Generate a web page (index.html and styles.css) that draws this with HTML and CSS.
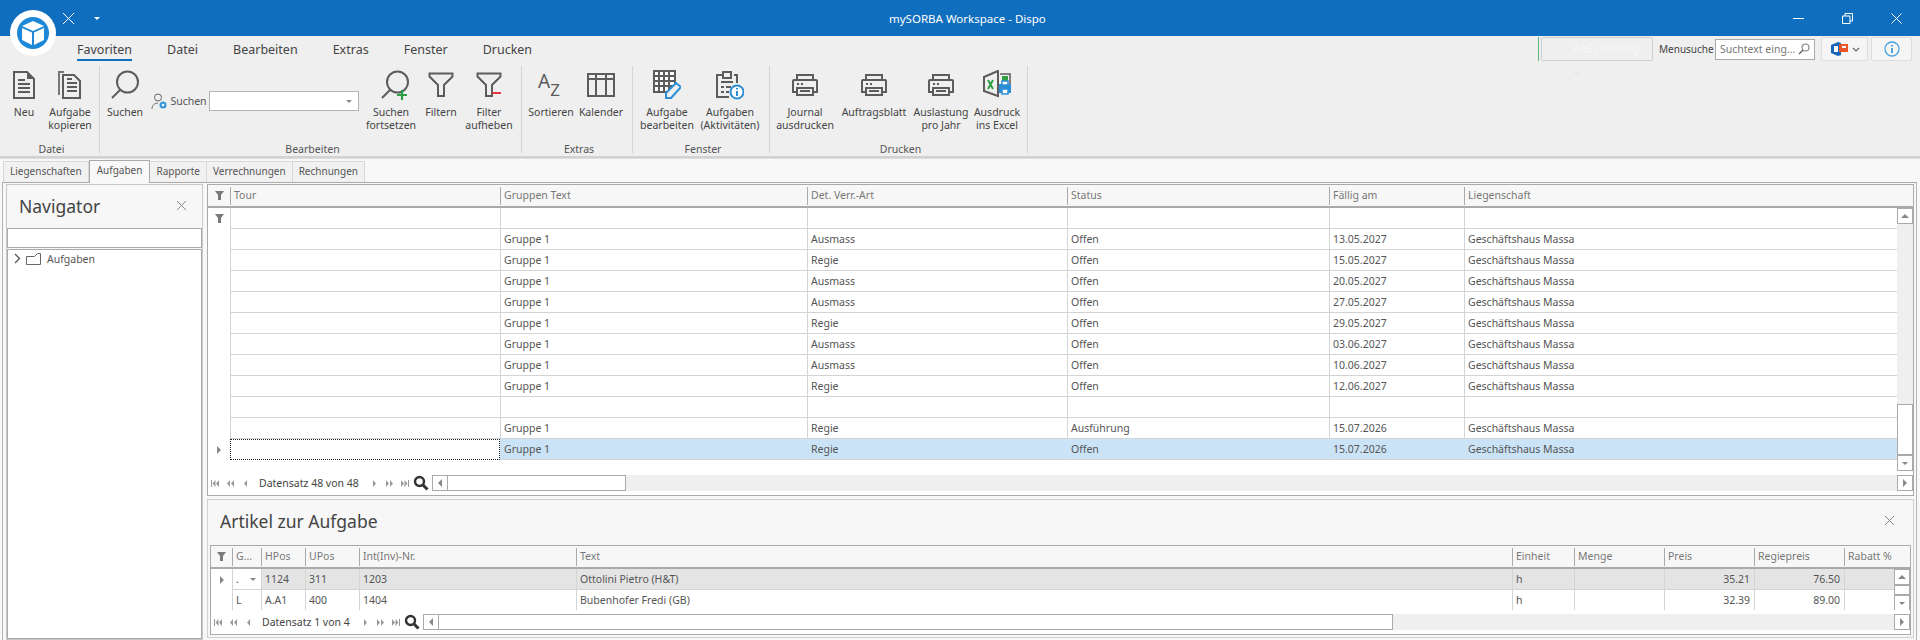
FILE: index.html
```html
<!DOCTYPE html>
<html lang="de">
<head>
    <meta charset="UTF-8">
    <title>mySORBA Workspace - Dispo</title>
    <link rel="stylesheet" href="styles.css">
</head>
<body>

    <svg class="defs" width="0" height="0">
        <symbol id="i-doc" viewBox="0 0 24 30"><path d="M2 2h13l7 7v19H2z" fill="none" stroke="#5c5c5c" stroke-width="2"/><path d="M15 2v7h7z" fill="#5c5c5c"/><path d="M6 10h7M6 14h12M6 18h12M6 22h12" stroke="#5c5c5c" stroke-width="2"/></symbol>
        <symbol id="i-mag" viewBox="0 0 30 30"><circle cx="17.500" cy="12" r="10.500" fill="none" stroke="#5c5c5c" stroke-width="2"/><path d="M10 20L2 28" stroke="#5c5c5c" stroke-width="2"/></symbol>
        <symbol id="i-funnel" viewBox="0 0 26 26"><path d="M1.500 1.500h23v3L16 13v11h-6V13L1.500 4.500z" fill="none" stroke="#5c5c5c" stroke-width="2"/></symbol>
        <symbol id="i-print" viewBox="0 0 28 24"><path d="M6 7V2h16v5M6 19H2V8q0-1 1-1h22q1 0 1 1v11h-4" fill="none" stroke="#5c5c5c" stroke-width="2"/><path d="M6 15h16v7H6z" fill="none" stroke="#5c5c5c" stroke-width="2"/><path d="M6 11h2M10 11h2M9 18h10" stroke="#5c5c5c" stroke-width="2"/></symbol>
        <symbol id="i-small-funnel" viewBox="0 0 11 11"><path d="M1 1h9L7 5v5H4V5z" fill="#7a7a7a"/></symbol>
        <symbol id="i-lens" viewBox="0 0 16 16"><circle cx="6.500" cy="6.500" r="4.500" fill="none" stroke="#333" stroke-width="2.400"/><path d="M10 10l4.500 4.500" stroke="#333" stroke-width="3"/></symbol>
        <symbol id="p-first" viewBox="0 0 8 7"><path d="M0 0h1v7H0zM4.500 0v7L1.500 3.500zM8 0v7L5 3.500z" fill="#999"/></symbol>
        <symbol id="p-prevs" viewBox="0 0 8 7"><path d="M4 0v7L1 3.500zM8 0v7L5 3.500z" fill="#999"/></symbol>
        <symbol id="p-prev" viewBox="0 0 8 7"><path d="M6 0v7L3 3.500z" fill="#999"/></symbol>
        <symbol id="p-next" viewBox="0 0 8 7"><path d="M2 0v7l3-3.500z" fill="#999"/></symbol>
        <symbol id="p-nexts" viewBox="0 0 8 7"><path d="M0 0v7l3-3.500zM4 0v7l3-3.500z" fill="#999"/></symbol>
        <symbol id="p-last" viewBox="0 0 8 7"><path d="M0 0v7l3-3.500zM3.500 0v7l3-3.500zM7 0h1v7H7z" fill="#999"/></symbol>
    </svg>

    <div class="titlebar">
        <div class="quick">
            <svg class="quick-x" width="13" height="13" viewBox="0 0 13 13"><path d="M1 1l11 11M12 1L1 12" stroke="#fff" stroke-width="1"/></svg>
            <span class="quick-caret"></span>
        </div>
        <div class="title-text">mySORBA Workspace - Dispo</div>
        <div class="win-btns">
            <svg width="11" height="11" viewBox="0 0 11 11"><path d="M0 5.500h11" stroke="#fff"/></svg>
            <svg width="11" height="11" viewBox="0 0 11 11"><path d="M.5 3h7.500v7.500H.5zM3 3V.5h7.500V8H8" fill="none" stroke="#fff"/></svg>
            <svg width="11" height="11" viewBox="0 0 11 11"><path d="M.5.500l10 10M10.500.500l-10 10" stroke="#fff"/></svg>
        </div>
    </div>

    <div class="logo">
        <div class="logo-inner">
            <svg width="24" height="26" viewBox="0 0 24 26"><path d="M12 1l11 5-11 5L1 6z" fill="#fff"/><path d="M1 8l10 4.500V25L1 20z" fill="#fff"/><path d="M23 8l-10 4.500V25l10-5z" fill="#fff"/></svg>
        </div>
    </div>

    <div class="ribbon">
        <div class="menu-row">
            <nav class="menu">
                <span class="menu-item active">Favoriten</span>
                <span class="menu-item">Datei</span>
                <span class="menu-item">Bearbeiten</span>
                <span class="menu-item">Extras</span>
                <span class="menu-item">Fenster</span>
                <span class="menu-item">Drucken</span>
            </nav>
            <div class="menu-tools">
                <div class="tenant">AaEsTesting <span class="tenant-arrow">&#8964;</span></div>
                <span class="tool-label">Menusuche</span>
                <div class="tool-search">
                    <span>Suchtext eing...</span>
                    <svg width="12" height="12" viewBox="0 0 12 12"><circle cx="7.500" cy="4.500" r="3.500" fill="none" stroke="#888" stroke-width="1.200"/><path d="M5 7L1 11" stroke="#666" stroke-width="1.500"/></svg>
                </div>
                <div class="tool-btn tool-office">
                    <svg width="19" height="16" viewBox="0 0 19 16"><path d="M8 1L1 4v8l7 3 3-1V2z" fill="#1767b8"/><path d="M4 5h4v6H4z" fill="#fff"/><path d="M9 3h9v8H9z" fill="#e8562a"/><path d="M12 5h4v2h-4z" fill="#fff"/></svg>
                    <svg width="8" height="5" viewBox="0 0 8 5"><path d="M1 1l3 3 3-3" fill="none" stroke="#666" stroke-width="1.200"/></svg>
                </div>
                <div class="tool-btn tool-info">
                    <svg width="16" height="16" viewBox="0 0 16 16"><circle cx="8" cy="8" r="7" fill="none" stroke="#4aa3df" stroke-width="1.300"/><path d="M8 4v1.500M8 7v5" stroke="#2b8fd6" stroke-width="1.600"/></svg>
                </div>
            </div>
        </div>

        <div class="groups">
            <section class="group g-datei">
                <div class="group-items">
                    <div class="rb w40"><svg class="rb-icon" width="24" height="30"><use href="#i-doc"/></svg><span>Neu</span></div>
                    <div class="rb w48">
                        <svg class="rb-icon" width="24" height="30" viewBox="0 0 24 30"><path d="M6 2h-5v23" fill="none" stroke="#777" stroke-width="2"/><path d="M5 5h11l6 6v17H5z" fill="none" stroke="#5c5c5c" stroke-width="2"/><path d="M9 13h10M9 17h10M9 21h10M9 9h5" stroke="#5c5c5c" stroke-width="2"/></svg>
                        <span>Aufgabe kopieren</span>
                    </div>
                </div>
                <div class="group-name">Datei</div>
            </section>

            <section class="group g-bearb">
                <div class="group-items">
                    <div class="rb w42"><svg class="rb-icon" width="30" height="30"><use href="#i-mag"/></svg><span>Suchen</span></div>
                    <div class="rb-search">
                        <svg width="17" height="17" viewBox="0 0 17 17"><circle cx="7" cy="4.500" r="3.500" fill="none" stroke="#666"/><path d="M1 16c0-4 3-6 6-6" fill="none" stroke="#666"/><circle cx="12" cy="12" r="3.500" fill="#3a97d9"/><circle cx="12" cy="12" r="1.200" fill="#fff"/></svg>
                        <span>Suchen</span>
                        <div class="combo"><i class="caret-down"></i></div>
                    </div>
                    <div class="rb w54 icon-over">
                        <svg class="rb-icon" width="30" height="30" viewBox="0 0 30 30"><use href="#i-mag"/><path d="M17 25h10M22 20v10" stroke="#2f9e44" stroke-width="2.200"/></svg>
                        <span>Suchen fortsetzen</span>
                    </div>
                    <div class="rb w42"><svg class="rb-icon" width="26" height="30" viewBox="0 -2 26 30"><use href="#i-funnel" width="26" height="26"/></svg><span>Filtern</span></div>
                    <div class="rb w50">
                        <svg class="rb-icon" width="26" height="30" viewBox="0 -2 26 30"><use href="#i-funnel" width="26" height="26"/><path d="M16 21h9" stroke="#e0383e" stroke-width="2"/></svg>
                        <span>Filter aufheben</span>
                    </div>
                </div>
                <div class="group-name">Bearbeiten</div>
            </section>

            <section class="group g-extras">
                <div class="group-items">
                    <div class="rb w50">
                        <div class="sort-icon"><b class="sort-a">A</b><b class="sort-z">Z</b></div>
                        <span>Sortieren</span>
                    </div>
                    <div class="rb w46">
                        <svg class="rb-icon" width="28" height="30" viewBox="0 0 28 30"><path d="M1 4h26v22H1zM1 9h26M9 4v22M19 4v22" fill="none" stroke="#5c5c5c" stroke-width="2"/></svg>
                        <span>Kalender</span>
                    </div>
                </div>
                <div class="group-name">Extras</div>
            </section>

            <section class="group g-fenster">
                <div class="group-items">
                    <div class="rb w60">
                        <svg class="rb-icon" width="28" height="30" viewBox="0 0 28 30"><path d="M1 1h21v21H1z" fill="#fff" stroke="#5c5c5c" stroke-width="2"/><path d="M1 6h21M1 11h21M1 16h21M6 1v21M11 1v21M16 1v21" stroke="#5c5c5c" stroke-width="2"/><path d="M13 28v-5L23 13l5 4-10 11z" fill="#efefef" stroke="#2b8fd6" stroke-width="2"/></svg>
                        <span>Aufgabe bearbeiten</span>
                    </div>
                    <div class="rb w62">
                        <svg class="rb-icon" width="28" height="30" viewBox="0 0 28 30"><path d="M7 5H1v22h12M19 5h-1" fill="none" stroke="#5c5c5c" stroke-width="2"/><path d="M7 2h8v6H7zM19 5h2v8" fill="none" stroke="#5c5c5c" stroke-width="2"/><path d="M5 12h12M5 17h3M5 22h3M10 17h5M10 22h3" stroke="#5c5c5c" stroke-width="2"/><circle cx="21" cy="22" r="6.500" fill="#fff" stroke="#2b8fd6" stroke-width="2"/><path d="M21 18v1.500M21 21v5" stroke="#2b8fd6" stroke-width="2"/></svg>
                        <span>Aufgaben (Aktivitäten)</span>
                    </div>
                </div>
                <div class="group-name">Fenster</div>
            </section>

            <section class="group g-drucken">
                <div class="group-items">
                    <div class="rb w62"><svg class="rb-icon printer" width="28" height="24"><use href="#i-print"/></svg><span>Journal ausdrucken</span></div>
                    <div class="rb w72"><svg class="rb-icon printer" width="28" height="24"><use href="#i-print"/></svg><span>Auftragsblatt</span></div>
                    <div class="rb w58"><svg class="rb-icon printer" width="28" height="24"><use href="#i-print"/></svg><span>Auslastung pro Jahr</span></div>
                    <div class="rb w50">
                        <svg class="rb-icon" width="28" height="30" viewBox="0 0 28 30"><path d="M15 1L1 7v14l14 5z" fill="none" stroke="#5c5c5c" stroke-width="2"/><path d="M5 10l5 9M10 10l-5 9" stroke="#2f9e44" stroke-width="2"/><path d="M17 4h10v10" fill="none" stroke="#5c5c5c" stroke-width="1.500"/><path d="M19 6h6v5h-6z" fill="#2f9e44"/><path d="M16 14h12v9H16z" fill="#2b8fd6"/><path d="M19 11h6v4h-6zM19 19h6v5h-6z" fill="#fff" stroke="#2b8fd6" stroke-width="1.500"/></svg>
                        <span>Ausdruck ins Excel</span>
                    </div>
                </div>
                <div class="group-name">Drucken</div>
            </section>
        </div>
    </div>

    <div class="tabs">
        <span class="tab">Liegenschaften</span>
        <span class="tab active">Aufgaben</span>
        <span class="tab">Rapporte</span>
        <span class="tab">Verrechnungen</span>
        <span class="tab">Rechnungen</span>
    </div>

    <div class="workspace">
        <aside class="navigator">
            <div class="panel-head nav-head">
                <span class="nav-title">Navigator</span>
                <svg width="11" height="11" viewBox="0 0 11 11"><path d="M1 1l9 9M10 1l-9 9" stroke="#888"/></svg>
            </div>
            <div class="nav-input"></div>
            <div class="nav-tree">
                <svg width="7" height="11" viewBox="0 0 7 11"><path d="M1 1l4.500 4.500L1 10" fill="none" stroke="#555" stroke-width="1.300"/></svg>
                <svg width="15" height="12" viewBox="0 0 15 12"><path d="M.5 3.500h8l3-3h3v11H.5z" fill="none" stroke="#666"/></svg>
                <span>Aufgaben</span>
            </div>
        </aside>

        <main class="content">
            <!-- Aufgaben grid -->
            <div class="grid upper">
                <div class="row head">
                    <div class="ind"><svg width="11" height="11"><use href="#i-small-funnel"/></svg></div>
                    <div class="th">Tour</div>
                    <div class="th">Gruppen Text</div>
                    <div class="th">Det. Verr.-Art</div>
                    <div class="th">Status</div>
                    <div class="th">Fällig am</div>
                    <div class="th">Liegenschaft</div>
                </div>
                <div class="grid-body">
                    <div class="rows">
                        <div class="row"><div class="ind"><svg width="11" height="11"><use href="#i-small-funnel"/></svg></div><div class="td"></div><div class="td"></div><div class="td"></div><div class="td"></div><div class="td"></div><div class="td"></div></div>
                        <div class="row"><div class="ind"></div><div class="td"></div><div class="td">Gruppe 1</div><div class="td">Ausmass</div><div class="td">Offen</div><div class="td">13.05.2027</div><div class="td">Geschäftshaus Massa</div></div>
                        <div class="row"><div class="ind"></div><div class="td"></div><div class="td">Gruppe 1</div><div class="td">Regie</div><div class="td">Offen</div><div class="td">15.05.2027</div><div class="td">Geschäftshaus Massa</div></div>
                        <div class="row"><div class="ind"></div><div class="td"></div><div class="td">Gruppe 1</div><div class="td">Ausmass</div><div class="td">Offen</div><div class="td">20.05.2027</div><div class="td">Geschäftshaus Massa</div></div>
                        <div class="row"><div class="ind"></div><div class="td"></div><div class="td">Gruppe 1</div><div class="td">Ausmass</div><div class="td">Offen</div><div class="td">27.05.2027</div><div class="td">Geschäftshaus Massa</div></div>
                        <div class="row"><div class="ind"></div><div class="td"></div><div class="td">Gruppe 1</div><div class="td">Regie</div><div class="td">Offen</div><div class="td">29.05.2027</div><div class="td">Geschäftshaus Massa</div></div>
                        <div class="row"><div class="ind"></div><div class="td"></div><div class="td">Gruppe 1</div><div class="td">Ausmass</div><div class="td">Offen</div><div class="td">03.06.2027</div><div class="td">Geschäftshaus Massa</div></div>
                        <div class="row"><div class="ind"></div><div class="td"></div><div class="td">Gruppe 1</div><div class="td">Ausmass</div><div class="td">Offen</div><div class="td">10.06.2027</div><div class="td">Geschäftshaus Massa</div></div>
                        <div class="row"><div class="ind"></div><div class="td"></div><div class="td">Gruppe 1</div><div class="td">Regie</div><div class="td">Offen</div><div class="td">12.06.2027</div><div class="td">Geschäftshaus Massa</div></div>
                        <div class="row"><div class="ind"></div><div class="td"></div><div class="td"></div><div class="td"></div><div class="td"></div><div class="td"></div><div class="td"></div></div>
                        <div class="row"><div class="ind"></div><div class="td"></div><div class="td">Gruppe 1</div><div class="td">Regie</div><div class="td">Ausführung</div><div class="td">15.07.2026</div><div class="td">Geschäftshaus Massa</div></div>
                        <div class="row selected"><div class="ind"><i class="arrow-right"></i></div><div class="td focus"></div><div class="td">Gruppe 1</div><div class="td">Regie</div><div class="td">Offen</div><div class="td">15.07.2026</div><div class="td">Geschäftshaus Massa</div></div>
                    </div>
                    <div class="vscroll">
                        <div class="sb-btn"><i class="caret-up"></i></div>
                        <div class="sb-track"></div>
                        <div class="sb-thumb tall"></div>
                        <div class="sb-btn"><i class="caret-down"></i></div>
                    </div>
                </div>
                <div class="navbar">
                    <div class="pager">
                        <svg class="pg" width="8" height="7"><use href="#p-first"/></svg>
                        <svg class="pg" width="8" height="7"><use href="#p-prevs"/></svg>
                        <svg class="pg" width="8" height="7"><use href="#p-prev"/></svg>
                        <span class="pager-text">Datensatz 48 von 48</span>
                        <svg class="pg" width="8" height="7"><use href="#p-next"/></svg>
                        <svg class="pg" width="8" height="7"><use href="#p-nexts"/></svg>
                        <svg class="pg" width="8" height="7"><use href="#p-last"/></svg>
                        <svg class="lens" width="16" height="16"><use href="#i-lens"/></svg>
                    </div>
                    <div class="hscroll">
                        <div class="sb-btn side"><i class="caret-left"></i></div>
                        <div class="hthumb upper-thumb"></div>
                        <div class="hspace"></div>
                        <div class="sb-btn side"><i class="caret-right"></i></div>
                    </div>
                </div>
            </div>

            <!-- Artikel panel -->
            <div class="artikel">
                <div class="panel-head art-head">
                    <span class="art-title">Artikel zur Aufgabe</span>
                    <svg width="11" height="11" viewBox="0 0 11 11"><path d="M1 1l9 9M10 1l-9 9" stroke="#888"/></svg>
                </div>
                <div class="grid lower">
                    <div class="row head">
                        <div class="ind"><svg width="11" height="11"><use href="#i-small-funnel"/></svg></div>
                        <div class="th">G...</div>
                        <div class="th">HPos</div>
                        <div class="th">UPos</div>
                        <div class="th">Int(Inv)-Nr.</div>
                        <div class="th">Text</div>
                        <div class="th">Einheit</div>
                        <div class="th">Menge</div>
                        <div class="th">Preis</div>
                        <div class="th">Regiepreis</div>
                        <div class="th">Rabatt %</div>
                    </div>
                    <div class="grid-body">
                        <div class="rows">
                            <div class="row current"><div class="ind"><i class="arrow-right"></i></div><div class="td plain combo-cell">.<i class="caret-down"></i></div><div class="td">1124</div><div class="td">311</div><div class="td">1203</div><div class="td">Ottolini Pietro (H&amp;T)</div><div class="td">h</div><div class="td"></div><div class="td num">35.21</div><div class="td num">76.50</div><div class="td"></div></div>
                            <div class="row"><div class="ind"></div><div class="td">L</div><div class="td">A.A1</div><div class="td">400</div><div class="td">1404</div><div class="td">Bubenhofer Fredi (GB)</div><div class="td">h</div><div class="td"></div><div class="td num">32.39</div><div class="td num">89.00</div><div class="td"></div></div>
                            <div class="row"><div class="ind"></div><div class="td"></div><div class="td"></div><div class="td"></div><div class="td"></div><div class="td"></div><div class="td"></div><div class="td"></div><div class="td"></div><div class="td"></div><div class="td"></div></div>
                        </div>
                        <div class="vscroll">
                            <div class="sb-btn"><i class="caret-up"></i></div>
                            <div class="sb-thumb small"></div>
                            <div class="sb-btn"><i class="caret-down"></i></div>
                        </div>
                    </div>
                    <div class="navbar">
                        <div class="pager">
                            <svg class="pg" width="8" height="7"><use href="#p-first"/></svg>
                            <svg class="pg" width="8" height="7"><use href="#p-prevs"/></svg>
                            <svg class="pg" width="8" height="7"><use href="#p-prev"/></svg>
                            <span class="pager-text">Datensatz 1 von 4</span>
                            <svg class="pg" width="8" height="7"><use href="#p-next"/></svg>
                            <svg class="pg" width="8" height="7"><use href="#p-nexts"/></svg>
                            <svg class="pg" width="8" height="7"><use href="#p-last"/></svg>
                            <svg class="lens" width="16" height="16"><use href="#i-lens"/></svg>
                        </div>
                        <div class="hscroll">
                            <div class="sb-btn side"><i class="caret-left"></i></div>
                            <div class="hthumb lower-thumb"></div>
                            <div class="hspace"></div>
                            <div class="sb-btn side"><i class="caret-right"></i></div>
                        </div>
                    </div>
                </div>
            </div>
        </main>
    </div>

</body>
</html>
```

FILE: styles.css
```css
* {
    box-sizing: border-box;
}

html, body {
    height: 640px;
    overflow: hidden;
}

body {
    margin: 0;
    width: 1920px;
    background-color: #f8f8f8;
    font-family: "Noto Sans", Arial, sans-serif;
    font-size: 10.5px;
    color: #555;
}

.defs {
    position: absolute;
}

/* Title bar */
.titlebar {
    height: 36px;
    background-color: #106ebe;
    color: #fff;
    display: flex;
    align-items: center;
    padding-left: 62px;
}

.quick {
    width: 60px;
    display: flex;
    align-items: center;
    gap: 19px;
}

.quick-caret {
    width: 0;
    height: 0;
    border-left: 3px solid transparent;
    border-right: 3px solid transparent;
    border-top: 3px solid #fff;
}

.title-text {
    margin-left: 767px;
    font-size: 11.500px;
}

.win-btns {
    margin-left: auto;
    display: flex;
    gap: 38px;
    padding-right: 18px;
}

.logo {
    position: absolute;
    left: 10px;
    top: 10px;
    width: 46px;
    height: 46px;
    border-radius: 50%;
    background-color: #fff;
    display: flex;
    align-items: center;
    justify-content: center;
}

.logo-inner {
    width: 32px;
    height: 32px;
    border-radius: 50%;
    background-color: #1e88d8;
    display: flex;
    align-items: center;
    justify-content: center;
}

/* Ribbon */
.ribbon {
    height: 122px;
    background-color: #efefef;
    border-bottom: 2px solid #d2d2d2;
}

.menu-row {
    height: 28px;
    display: flex;
    justify-content: space-between;
    padding: 1px 8px 0 77px;
}

.menu {
    display: flex;
    gap: 35px;
}

.menu-item {
    height: 24px;
    line-height: 25px;
    font-size: 12.500px;
    color: #444;
}

.menu-item.active {
    border-bottom: 2px solid #106ebe;
}

.menu-tools {
    display: flex;
    align-items: center;
    height: 24px;
    border-left: 1px solid #5cb878;
    padding-left: 2px;
}

.tenant {
    width: 112px;
    height: 24px;
    border: 1px solid #d0d0d0;
    border-radius: 2px;
    padding-left: 30px;
    line-height: 22px;
    font-size: 12px;
    color: #f6f6f6;
}

.tenant-arrow {
    color: #e4e4e4;
}

.tool-label {
    width: 62px;
    padding-left: 6px;
    font-size: 10px;
    color: #444;
}

.tool-search {
    width: 100px;
    height: 21px;
    border: 1px solid #aaa;
    background-color: #fff;
    display: flex;
    align-items: center;
    justify-content: space-between;
    padding: 0 4px;
    color: #777;
    white-space: nowrap;
}

.tool-btn {
    height: 24px;
    border: 1px solid #ddd;
    border-radius: 2px;
    background-color: #f5f5f5;
    display: flex;
    align-items: center;
    justify-content: center;
    gap: 3px;
}

.tool-office {
    width: 47px;
    margin-left: 6px;
}

.tool-info {
    width: 41px;
    margin-left: 3px;
}

.groups {
    display: flex;
    height: 92px;
}

.group {
    display: flex;
    flex-direction: column;
    height: 87px;
    margin-top: 2px;
    border-right: 1px solid #d4d4d4;
}

.g-datei { width: 100px; padding-left: 4px; }
.g-bearb { width: 422px; padding-left: 4px; }
.g-extras { width: 111px; padding-left: 4px; }
.g-fenster { width: 137px; padding-left: 4px; }
.g-drucken { width: 258px; padding-left: 4px; }

.group-items {
    display: flex;
    gap: 2px;
    flex: 1;
}

.group-name {
    height: 10px;
    line-height: 12px;
    text-align: center;
    color: #555;
}

.rb {
    display: flex;
    flex-direction: column;
    align-items: center;
    text-align: center;
    line-height: 13px;
    color: #444;
}

.rb span {
    display: block;
}

.rb-icon {
    height: 30px;
    margin: 4px 0 6px;
    flex-shrink: 0;
}

.rb-icon.printer {
    height: 24px;
    margin: 7px 0 9px;
}

.icon-over .rb-icon {
    margin-left: 8px;
}

.w40 { width: 40px; }
.w42 { width: 42px; }
.w46 { width: 46px; }
.w48 { width: 48px; }
.w50 { width: 50px; }
.w54 { width: 54px; }
.w58 { width: 58px; }
.w60 { width: 60px; }
.w62 { width: 62px; }
.w72 { width: 72px; }

.rb-search {
    width: 214px;
    height: 20px;
    margin-top: 25px;
    padding-left: 3px;
    display: flex;
    align-items: center;
    justify-content: space-between;
    padding-right: 3px;
}

.combo {
    width: 150px;
    height: 20px;
    border: 1px solid #b4b4b4;
    background-color: #fff;
    display: flex;
    align-items: center;
    justify-content: flex-end;
    padding-right: 6px;
}

.sort-icon {
    width: 26px;
    height: 30px;
    margin: 4px 0 6px;
    flex-shrink: 0;
    display: flex;
    color: #5c5c5c;
    font-weight: normal;
}

.sort-a {
    font-size: 19px;
    font-weight: normal;
    line-height: 22px;
}

.sort-z {
    font-size: 17px;
    font-weight: normal;
    line-height: 20px;
    margin-top: 10px;
}

.caret-down, .caret-up, .caret-left, .caret-right, .arrow-right {
    display: block;
    width: 0;
    height: 0;
}

.caret-down {
    border-left: 3px solid transparent;
    border-right: 3px solid transparent;
    border-top: 3px solid #888;
}

.caret-up {
    border-left: 4px solid transparent;
    border-right: 4px solid transparent;
    border-bottom: 4px solid #888;
}

.caret-left {
    border-top: 4px solid transparent;
    border-bottom: 4px solid transparent;
    border-right: 4px solid #888;
}

.caret-right, .arrow-right {
    border-top: 4px solid transparent;
    border-bottom: 4px solid transparent;
    border-left: 4px solid #888;
}

/* Tabs */
.tabs {
    height: 24px;
    display: flex;
    align-items: flex-end;
    padding: 0 0 0 3px;
    border-top: 1px solid #ddd;
    position: relative;
    font-size: 10px;
}

.tab {
    height: 21px;
    padding: 0 6px;
    line-height: 19px;
    border: 1px solid #d8d8d8;
    border-bottom: none;
    border-left: none;
    background-color: #f1f1f1;
    color: #555;
}

.tab:first-child {
    border-left: 1px solid #d8d8d8;
}

.tab.active {
    height: 23px;
    padding: 0 7px;
    border: 1px solid #aaa;
    border-bottom: none;
    background-color: #f8f8f8;
    margin-bottom: -1px;
    position: relative;
}

.workspace {
    height: 458px;
    display: flex;
    gap: 4px;
    margin: 0 3px 0 2px;
    padding: 1px 2px 0 3px;
    border: 1px solid #b4b4b4;
    border-bottom: none;
    border-top-color: #aaa;
}

/* Navigator */
.navigator {
    width: 197px;
    border: 1px solid #c8c8c8;
    display: flex;
    flex-direction: column;
}

.panel-head {
    display: flex;
    align-items: center;
    justify-content: space-between;
    background-color: #f7f7f7;
}

.nav-head {
    height: 43px;
    padding: 0 15px 2px 12px;
}

.nav-title {
    font-size: 17.500px;
    color: #444;
}

.nav-input {
    height: 20px;
    background-color: #fff;
    border: 1px solid #aaa;
}

.nav-tree {
    flex: 1;
    margin-top: 1px;
    background-color: #fff;
    border: 1px solid #aaa;
    display: flex;
    align-items: flex-start;
    gap: 5px;
    padding: 2px 0 0 6px;
    line-height: 14px;
}

.nav-tree svg {
    margin-top: 1px;
}

.nav-tree span {
    margin-left: 1px;
}

/* Grids */
.content {
    flex: 1;
    display: flex;
    flex-direction: column;
    gap: 3px;
    min-width: 0;
    padding-bottom: 2px;
}

.grid {
    border: 1px solid #aaa;
    background-color: #fff;
    display: flex;
    flex-direction: column;
}

.upper {
    height: 312px;
}

.upper .row {
    grid-template-columns: 22px 270px 307px 260px 262px 135px 1fr;
}

.lower .row {
    grid-template-columns: 21px 29px 44px 54px 217px 936px 62px 90px 90px 90px 1fr;
}

.row {
    display: grid;
    height: 21px;
}

.row.head {
    height: 23px;
    background-color: #f7f7f7;
    border-bottom: 2px solid #aaa;
    color: #777;
    align-items: center;
}

.ind {
    height: 100%;
    display: flex;
    align-items: center;
    justify-content: center;
    background-color: #fff;
}

.head .ind {
    background-color: #f7f7f7;
}

.th {
    height: 18px;
    line-height: 16px;
    border-left: 1px solid #aaa;
    padding-left: 3px;
    white-space: nowrap;
    overflow: hidden;
}

.td {
    border-left: 1px solid #d4d4d4;
    border-bottom: 1px solid #d4d4d4;
    padding-left: 3px;
    line-height: 20px;
    white-space: nowrap;
    overflow: hidden;
}

.num {
    text-align: right;
    padding-right: 4px;
}

.grid-body {
    display: flex;
    flex: 1;
    min-height: 0;
    overflow: hidden;
}

.rows {
    flex: 1;
    min-width: 0;
    overflow: hidden;
}

.selected .td {
    background-color: #cbe3f6;
    border-left-color: #cbe3f6;
}

.selected .td.focus {
    background-color: #fff;
    border: 1px dotted #222;
}

.current .td {
    background-color: #e4e4e4;
    border-left-color: #d4d4d4;
}

.current .td.plain {
    background-color: #fff;
}

.combo-cell {
    display: flex;
    align-items: center;
    justify-content: space-between;
    padding-right: 5px;
}

.vscroll {
    width: 16px;
    margin-left: 0;
    background-color: #efefef;
    display: flex;
    flex-direction: column;
}

.sb-btn {
    width: 16px;
    height: 16px;
    flex-shrink: 0;
    background-color: #fff;
    border: 1px solid #aaa;
    display: flex;
    align-items: center;
    justify-content: center;
}

.sb-track {
    flex: 1;
}

.sb-thumb {
    width: 16px;
    background-color: #fff;
    border: 1px solid #aaa;
    flex-shrink: 0;
}

.sb-thumb.tall {
    height: 51px;
}

.sb-thumb.small {
    height: 10px;
}

.navbar {
    height: 24px;
    display: flex;
    align-items: center;
    background-color: #fff;
    flex-shrink: 0;
}

.pager {
    display: flex;
    align-items: center;
    padding-left: 3px;
    flex-shrink: 0;
    gap: 7px;
    color: #444;
}

.pager-text {
    margin: 0 5px 0 3px;
    white-space: nowrap;
}

.lens {
    margin-left: -3px;
}

.hscroll {
    flex: 1;
    display: flex;
    margin-left: 3px;
    background-color: #efefef;
}

.sb-btn.side {
    height: 16px;
}

.hthumb {
    height: 16px;
    background-color: #fff;
    border: 1px solid #aaa;
    border-left: none;
}

.upper-thumb {
    width: 178px;
}

.lower-thumb {
    width: 954px;
}

.hspace {
    flex: 1;
}

/* Artikel panel */
.artikel {
    flex: 1;
    border: 1px solid #d0d0d0;
    padding: 0 2px 2px;
    background-color: #f7f7f7;
    display: flex;
    flex-direction: column;
    min-height: 0;
}

.art-head {
    height: 45px;
    flex-shrink: 0;
    padding: 0 16px 4px 10px;
}

.art-title {
    font-size: 17.500px;
    color: #444;
}

.lower {
    flex: 1;
    min-height: 0;
}
```
